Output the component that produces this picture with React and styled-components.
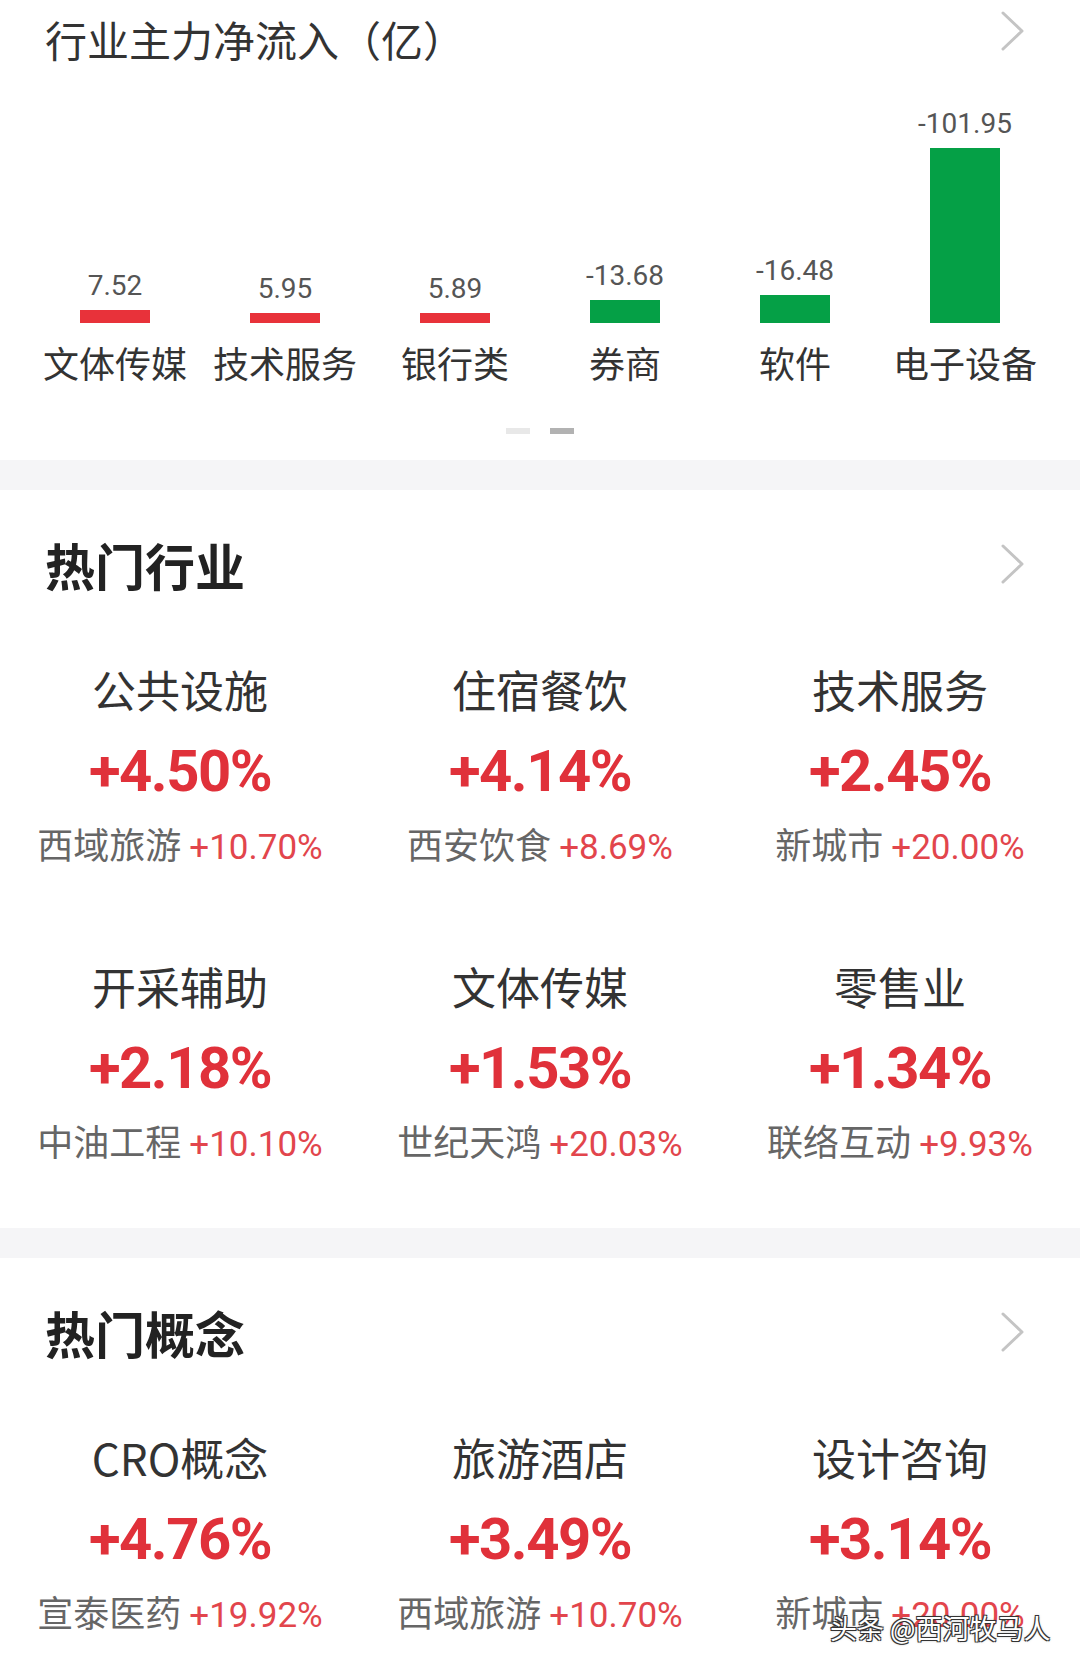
import React from "react";
import styled, { createGlobalStyle } from "styled-components";

const GlobalStyle = createGlobalStyle`
  body {
    margin: 0;
    background: #ffffff;
    font-family: "Noto Sans CJK SC", "Noto Sans", sans-serif;
  }
`;

const flows = [
  { name: "文体传媒", value: 7.52 },
  { name: "技术服务", value: 5.95 },
  { name: "银行类", value: 5.89 },
  { name: "券商", value: -13.68 },
  { name: "软件", value: -16.48 },
  { name: "电子设备", value: -101.95 },
];

const industries = [
  { name: "公共设施", pct: "+4.50%", stock: "西域旅游", stockPct: "+10.70%" },
  { name: "住宿餐饮", pct: "+4.14%", stock: "西安饮食", stockPct: "+8.69%" },
  { name: "技术服务", pct: "+2.45%", stock: "新城市", stockPct: "+20.00%" },
  { name: "开采辅助", pct: "+2.18%", stock: "中油工程", stockPct: "+10.10%" },
  { name: "文体传媒", pct: "+1.53%", stock: "世纪天鸿", stockPct: "+20.03%" },
  { name: "零售业", pct: "+1.34%", stock: "联络互动", stockPct: "+9.93%" },
];

const concepts = [
  { name: "CRO概念", pct: "+4.76%", stock: "宣泰医药", stockPct: "+19.92%" },
  { name: "旅游酒店", pct: "+3.49%", stock: "西域旅游", stockPct: "+10.70%" },
  { name: "设计咨询", pct: "+3.14%", stock: "新城市", stockPct: "+20.00%" },
];

const MAX_FLOW = 101.95;
const MAX_BAR = 175;

const Page = styled.div`
  position: relative;
  width: 1080px;
  height: 1670px;
  overflow: hidden;
  background: #fff;
`;

const FlowSection = styled.section`
  padding: 14px 0 26px;
`;

const Header = styled.div`
  display: flex;
  align-items: ${(p) => (p.$top ? "flex-start" : "center")};
  justify-content: space-between;
  padding: 0 54px 0 45px;

  svg {
    margin-top: ${(p) => (p.$top ? "-4px" : "0")};
  }
`;

const FlowTitle = styled.h2`
  margin: 0;
  font-size: 42px;
  line-height: 50px;
  font-weight: 400;
  color: #333;
`;

const SectionTitle = styled.h2`
  margin: 0;
  font-size: 50px;
  line-height: 60px;
  font-weight: 700;
  color: #222;
`;

const Chart = styled.div`
  display: flex;
  align-items: flex-end;
  height: 320px;
  padding: 0 30px;
`;

const Column = styled.div`
  flex: 1;
  display: flex;
  flex-direction: column;
  align-items: center;
`;

const FlowValue = styled.div`
  font-family: Roboto, "Noto Sans", sans-serif;
  font-size: 28px;
  line-height: 28px;
  color: #555;
  margin-bottom: 10px;
`;

const Bar = styled.div`
  width: 70px;
  background: ${(p) => (p.$up ? "#e8323a" : "#05a046")};
`;

const FlowLabel = styled.div`
  margin-top: 17px;
  font-size: 36px;
  line-height: 44px;
  color: #333;
`;

const Dots = styled.div`
  display: flex;
  justify-content: center;
  gap: 20px;
  margin-top: 44px;
`;

const Dot = styled.span`
  width: 24px;
  height: 6px;
  background: ${(p) => (p.$active ? "#b2b2b2" : "#e8e8e8")};
`;

const Band = styled.div`
  height: 30px;
  background: #f5f5f7;
`;

const HotSection = styled.section`
  padding: 44px 0 61px;
`;

const Grid = styled.div`
  display: grid;
  grid-template-columns: repeat(3, 1fr);
  row-gap: 88px;
  margin-top: 67px;
`;

const Item = styled.div`
  display: flex;
  flex-direction: column;
  align-items: center;
`;

const ItemName = styled.div`
  font-size: 44px;
  line-height: 56px;
  color: #333;
`;

const ItemPct = styled.div`
  margin-top: 22px;
  font-family: Roboto, "Noto Sans", sans-serif;
  font-size: 58px;
  line-height: 64px;
  font-weight: 700;
  letter-spacing: -1.5px;
  color: #e0313a;
`;

const ItemSub = styled.div`
  margin-top: 18px;
  font-size: 36px;
  line-height: 44px;
  color: #666;
  white-space: nowrap;
`;

const SubPct = styled.span`
  font-family: Roboto, "Noto Sans", sans-serif;
  font-size: 35px;
  color: #e2454c;
`;

const Watermark = styled.div`
  position: absolute;
  left: 830px;
  top: 1608px;
  font-size: 27px;
  line-height: 40px;
  color: #fff;
  text-shadow: 1px 1px 0 #333, -1px -1px 0 #333, 1px -1px 0 #333,
    -1px 1px 0 #333, 0 0 3px rgba(0, 0, 0, 0.5);
`;

const Chevron = () => (
  <svg width="26" height="42" viewBox="0 0 26 42">
    <polyline
      points="3,3 22,21 3,39"
      fill="none"
      stroke="#c4c4c4"
      strokeWidth="3"
      strokeLinecap="round"
      strokeLinejoin="round"
    />
  </svg>
);

const HotGrid = ({ items }) => (
  <Grid>
    {items.map((it) => (
      <Item key={it.name + it.pct}>
        <ItemName>{it.name}</ItemName>
        <ItemPct>{it.pct}</ItemPct>
        <ItemSub>
          {it.stock} <SubPct>{it.stockPct}</SubPct>
        </ItemSub>
      </Item>
    ))}
  </Grid>
);

const App = () => {
  return (
    <Page>
      <GlobalStyle />
      <FlowSection>
        <Header $top>
          <FlowTitle>行业主力净流入（亿）</FlowTitle>
          <Chevron />
        </Header>
        <Chart>
          {flows.map((f) => (
            <Column key={f.name}>
              <FlowValue>{f.value.toFixed(2)}</FlowValue>
              <Bar
                $up={f.value > 0}
                style={{ height: `${(Math.abs(f.value) / MAX_FLOW) * MAX_BAR}px` }}
              />
              <FlowLabel>{f.name}</FlowLabel>
            </Column>
          ))}
        </Chart>
        <Dots>
          <Dot />
          <Dot $active />
        </Dots>
      </FlowSection>
      <Band />
      <HotSection>
        <Header>
          <SectionTitle>热门行业</SectionTitle>
          <Chevron />
        </Header>
        <HotGrid items={industries} />
      </HotSection>
      <Band />
      <HotSection>
        <Header>
          <SectionTitle>热门概念</SectionTitle>
          <Chevron />
        </Header>
        <HotGrid items={concepts} />
      </HotSection>
      <Watermark>头条 @西河牧马人</Watermark>
    </Page>
  );
};

export default App;
